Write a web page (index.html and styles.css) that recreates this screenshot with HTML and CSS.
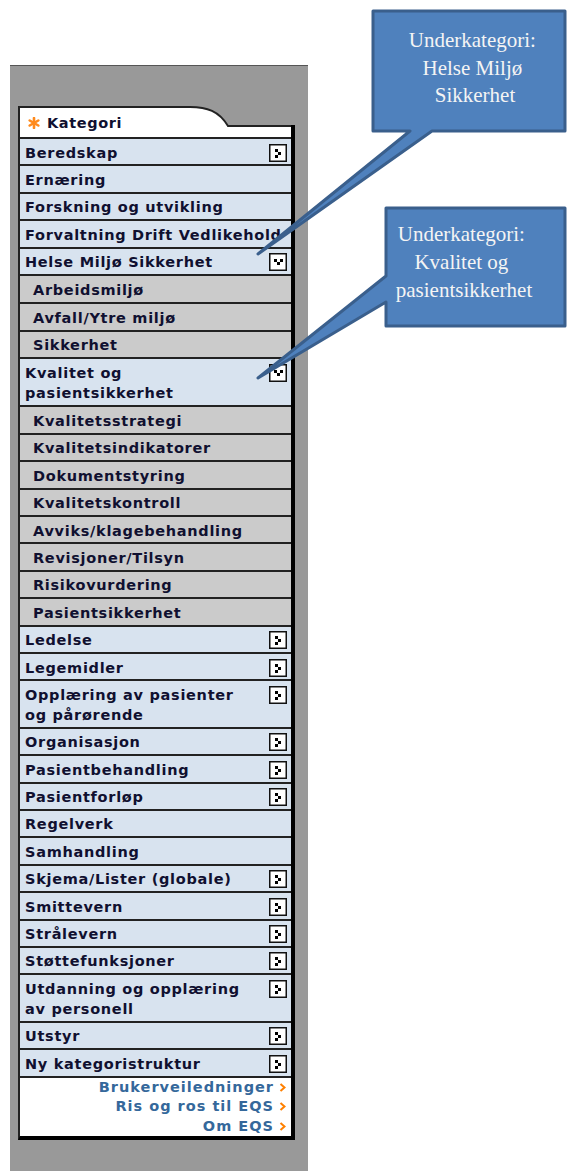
FILE: index.html
```html
<!DOCTYPE html>
<html lang="no">
<head>
<meta charset="utf-8">
<title>Kategori</title>
<link rel="stylesheet" href="styles.css">
</head>
<body>
<svg class="sprite" aria-hidden="true">
  <symbol id="ico-closed" viewBox="0 0 18 18">
    <rect x="0.75" y="0.75" width="16.5" height="16.5" fill="#fff" stroke="#111" stroke-width="1.5"/>
    <rect x="6" y="5" width="3" height="3" fill="#000"/>
    <rect x="9" y="8" width="3" height="3" fill="#000"/>
    <rect x="6" y="11" width="3" height="3" fill="#000"/>
  </symbol>
  <symbol id="ico-open" viewBox="0 0 18 18">
    <rect x="0.75" y="0.75" width="16.5" height="16.5" fill="#fff" stroke="#111" stroke-width="1.5"/>
    <rect x="5" y="6" width="3" height="3" fill="#000"/>
    <rect x="11" y="6" width="3" height="3" fill="#000"/>
    <rect x="8" y="9" width="3" height="3" fill="#000"/>
  </symbol>
  <symbol id="ico-link" viewBox="0 0 7 9">
    <polyline points="1.5,1 5.5,4.5 1.5,8" fill="none" stroke="#ff8000" stroke-width="2"/>
  </symbol>
</svg>

<div class="frame">
  <div class="panel">
    <div class="tab">
      <div class="tab-label">
        <svg class="star" viewBox="0 0 12 12" aria-hidden="true">
          <g stroke="#ff8a1c" stroke-width="2.6" stroke-linecap="round">
            <line x1="6" y1="1" x2="6" y2="11"/>
            <line x1="1.7" y1="3.5" x2="10.3" y2="8.5"/>
            <line x1="1.7" y1="8.5" x2="10.3" y2="3.5"/>
          </g>
        </svg>
        <span>Kategori</span>
      </div>
      <svg class="tab-curve" viewBox="0 0 105 31" aria-hidden="true">
        <path d="M0,1 C17,1 29,5 38,20 L101,20 L101,31 L0,31 Z" fill="#fff"/>
        <path d="M0,1 C17,1 29,5 38,20 L101,20" fill="none" stroke="#222" stroke-width="2"/>
        <rect x="101" y="19" width="4" height="12" fill="#000"/>
      </svg>
    </div>

    <div class="list">
      <div class="row"><span class="label">Beredskap</span><svg class="toggle"><use href="#ico-closed"/></svg></div>
      <div class="row"><span class="label">Ernæring</span></div>
      <div class="row"><span class="label">Forskning og utvikling</span></div>
      <div class="row nowrap"><span class="label">Forvaltning Drift Vedlikehold</span></div>
      <div class="row"><span class="label">Helse Miljø Sikkerhet</span><svg class="toggle"><use href="#ico-open"/></svg></div>
      <div class="sub-group">
        <div class="row sub"><span class="label">Arbeidsmiljø</span></div>
        <div class="row sub"><span class="label">Avfall/Ytre miljø</span></div>
        <div class="row sub"><span class="label">Sikkerhet</span></div>
      </div>
      <div class="row"><span class="label">Kvalitet og pasientsikkerhet</span><svg class="toggle"><use href="#ico-open"/></svg></div>
      <div class="sub-group">
        <div class="row sub"><span class="label">Kvalitetsstrategi</span></div>
        <div class="row sub"><span class="label">Kvalitetsindikatorer</span></div>
        <div class="row sub"><span class="label">Dokumentstyring</span></div>
        <div class="row sub"><span class="label">Kvalitetskontroll</span></div>
        <div class="row sub"><span class="label">Avviks/klagebehandling</span></div>
        <div class="row sub"><span class="label">Revisjoner/Tilsyn</span></div>
        <div class="row sub"><span class="label">Risikovurdering</span></div>
        <div class="row sub"><span class="label">Pasientsikkerhet</span></div>
      </div>
      <div class="row"><span class="label">Ledelse</span><svg class="toggle"><use href="#ico-closed"/></svg></div>
      <div class="row"><span class="label">Legemidler</span><svg class="toggle"><use href="#ico-closed"/></svg></div>
      <div class="row"><span class="label">Opplæring av pasienter og pårørende</span><svg class="toggle"><use href="#ico-closed"/></svg></div>
      <div class="row"><span class="label">Organisasjon</span><svg class="toggle"><use href="#ico-closed"/></svg></div>
      <div class="row"><span class="label">Pasientbehandling</span><svg class="toggle"><use href="#ico-closed"/></svg></div>
      <div class="row"><span class="label">Pasientforløp</span><svg class="toggle"><use href="#ico-closed"/></svg></div>
      <div class="row"><span class="label">Regelverk</span></div>
      <div class="row"><span class="label">Samhandling</span></div>
      <div class="row"><span class="label">Skjema/Lister (globale)</span><svg class="toggle"><use href="#ico-closed"/></svg></div>
      <div class="row"><span class="label">Smittevern</span><svg class="toggle"><use href="#ico-closed"/></svg></div>
      <div class="row"><span class="label">Strålevern</span><svg class="toggle"><use href="#ico-closed"/></svg></div>
      <div class="row"><span class="label">Støttefunksjoner</span><svg class="toggle"><use href="#ico-closed"/></svg></div>
      <div class="row"><span class="label">Utdanning og opplæring av personell</span><svg class="toggle"><use href="#ico-closed"/></svg></div>
      <div class="row"><span class="label">Utstyr</span><svg class="toggle"><use href="#ico-closed"/></svg></div>
      <div class="row"><span class="label">Ny kategoristruktur</span><svg class="toggle"><use href="#ico-closed"/></svg></div>

      <div class="links">
        <a class="link" href="#">Brukerveiledninger<svg class="link-arrow"><use href="#ico-link"/></svg></a>
        <a class="link" href="#">Ris og ros til EQS<svg class="link-arrow"><use href="#ico-link"/></svg></a>
        <a class="link" href="#">Om EQS<svg class="link-arrow"><use href="#ico-link"/></svg></a>
      </div>
    </div>
  </div>
</div>

<svg class="callouts" viewBox="0 0 567 400">
  <path class="bubble" d="M373,11 H565 V131 H432 L258,254 L410,131 H373 Z"/>
  <text class="bubble-text">
    <tspan x="475" y="47">Underkategori:</tspan>
    <tspan x="475" y="75">Helse Miljø</tspan>
    <tspan x="475" y="102">Sikkerhet</tspan>
  </text>
  <path class="bubble" d="M386,208 H565 V326 H386 V302 L258,378 L386,276 Z"/>
  <text class="bubble-text">
    <tspan x="464" y="241">Underkategori:</tspan>
    <tspan x="464" y="269">Kvalitet og</tspan>
    <tspan x="464" y="297">pasientsikkerhet</tspan>
  </text>
</svg>
</body>
</html>
```

FILE: styles.css
```css
html, body {
  margin: 0;
  background: #fff;
  overflow: hidden;
}

body {
  padding-top: 65px;
  height: 1171px;
  box-sizing: border-box;
  font-family: "DejaVu Sans", Verdana, sans-serif;
}

.sprite {
  display: none;
}

/* grey page frame around the menu */
.frame {
  margin-left: 10px;
  width: 298px;
  height: 1106px;
  box-sizing: border-box;
  background: #999;
  border-top: 1px solid #555;
  padding-top: 40px;
}

.panel {
  margin-left: 8px;
  width: 277px;
}

/* header tab with the curved shoulder */
.tab {
  display: flex;
  height: 31px;
}

.tab-label {
  width: 172px;
  box-sizing: border-box;
  background: #fff;
  border-top: 2px solid #222;
  border-left: 2px solid #222;
  display: flex;
  align-items: center;
  gap: 7px;
  padding-left: 8px;
  font-size: 14.5px;
  font-weight: bold;
  letter-spacing: 0.6px;
  color: #101030;
}

.star {
  width: 12px;
  height: 12px;
  flex: none;
}

.tab-curve {
  display: block;
  width: 105px;
  height: 31px;
  flex: none;
}

/* category list */
.list {
  border-left: 2px solid #222;
  border-right: 4px solid #000;
  border-bottom: 4px solid #000;
}

.row {
  display: flex;
  align-items: flex-start;
  border-top: 2px solid #222;
  background: #d8e3ef;
  padding: 3.5px 4px 1.9px 5px;
  line-height: 20px;
  font-size: 14.5px;
  font-weight: bold;
  letter-spacing: 0.7px;
  color: #101030;
  overflow: hidden;
}

.row.sub {
  background: #cbcbcb;
  padding-left: 13px;
}

/* expanded children start a touch lower than plain rows */
.sub-group > .row:first-child {
  padding-top: 4.5px;
}

.label {
  flex: 1;
  min-width: 0;
}

.row.nowrap .label {
  white-space: nowrap;
}

.toggle {
  flex: none;
  width: 18px;
  height: 18px;
  margin-top: 1px;
  margin-left: 9px;
}

/* footer links */
.links {
  border-top: 2px solid #222;
  background: #fff;
  padding: 0 5px 0 0;
  display: flex;
  flex-direction: column;
  align-items: flex-end;
}

.link {
  display: flex;
  align-items: center;
  gap: 5px;
  line-height: 19.5px;
  font-size: 14.5px;
  font-weight: bold;
  letter-spacing: 1px;
  color: #35689b;
  text-decoration: none;
}

.link-arrow {
  width: 7px;
  height: 9px;
  flex: none;
}

/* annotation bubbles drawn over the page */
.callouts {
  position: absolute;
  left: 0;
  top: 0;
  width: 567px;
  height: 400px;
  pointer-events: none;
}

.bubble {
  fill: #4f81bd;
  stroke: #3a5f8c;
  stroke-width: 3;
  stroke-linejoin: round;
}

.bubble-text {
  font-family: "Liberation Serif", "Times New Roman", serif;
  font-size: 21px;
  fill: #f4f4f4;
  text-anchor: middle;
}
```
